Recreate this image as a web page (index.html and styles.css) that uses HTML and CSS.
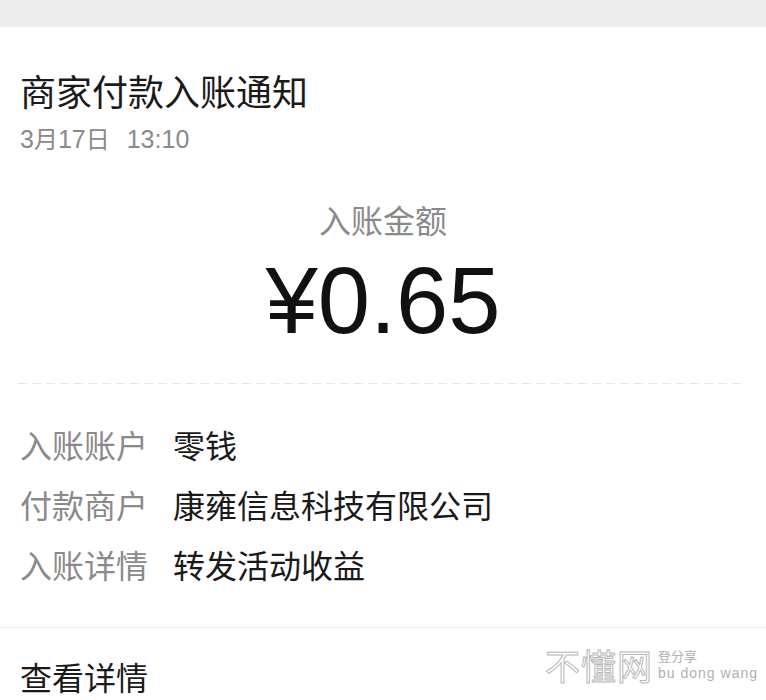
FILE: index.html
```html
<!DOCTYPE html>
<html lang="zh-CN">
<head>
    <meta charset="UTF-8">
    <meta name="viewport" content="width=device-width, initial-scale=1.0">
    <title>商家付款入账通知</title>
    <link rel="stylesheet" href="styles.css">
</head>
<body>

<div class="top-bar"></div>

<div class="notice">
    <div class="notice-head">
        <h1 class="notice-title">商家付款入账通知</h1>
        <div class="notice-date"><span class="latin">3</span>月<span class="latin">17</span>日<span class="latin time">13:10</span></div>
    </div>

    <div class="amount-box">
        <div class="amount-label">入账金额</div>
        <div class="amount-value">¥0.65</div>
    </div>

    <div class="dashed-line"></div>

    <div class="info-list">
        <div class="info-label">入账账户</div>
        <div class="info-value">零钱</div>
        <div class="info-label">付款商户</div>
        <div class="info-value">康雍信息科技有限公司</div>
        <div class="info-label">入账详情</div>
        <div class="info-value">转发活动收益</div>
    </div>
</div>

<div class="detail-link">
    <span>查看详情</span>
</div>

<div class="watermark">
    <span class="wm-big">不懂网</span>
    <span class="wm-small">
        <span class="wm-top">登分享</span>
        <span class="wm-pinyin">bu dong wang</span>
    </span>
</div>

</body>
</html>
```

FILE: styles.css
```css
body {
    margin: 0;
    background-color: #fff;
    font-family: "Noto Sans CJK SC", "Noto Sans", sans-serif;
    color: #1a1a1a;
    height: 700px;
    overflow: hidden;
    position: relative;
}

.top-bar {
    height: 27px;
    background-color: #ededed;
}

.notice {
    padding: 0 20px;
}

.notice-head {
    padding-top: 41px;
}

.notice-title {
    margin: 0;
    font-size: 36px;
    font-weight: normal;
    line-height: 44px;
}

.notice-date {
    margin-top: 10px;
    font-size: 24px;
    line-height: 32px;
    color: #8a8a8a;
}

.latin {
    font-family: "Liberation Sans", "Noto Sans", sans-serif;
    font-size: 25px;
}

.time {
    margin-left: 17px;
}

.amount-box {
    margin-top: 44px;
    text-align: center;
}

.amount-label {
    font-size: 32px;
    line-height: 40px;
    color: #8a8a8a;
}

.amount-value {
    margin-top: 12px;
    font-family: "Liberation Sans", "Noto Sans", sans-serif;
    font-size: 94px;
    line-height: 100px;
    color: #111;
}

.dashed-line {
    margin-top: 32px;
    margin-right: 1px;
    margin-left: -2px;
    height: 1px;
    background-image: repeating-linear-gradient(90deg, #e6e6e6 0, #e6e6e6 9px, transparent 9px, transparent 14px);
}

.info-list {
    margin-top: 30px;
    display: grid;
    grid-template-columns: 128px 1fr;
    column-gap: 25px;
    font-size: 32px;
    line-height: 60px;
}

.info-label {
    color: #8a8a8a;
}

.info-value {
    color: #1a1a1a;
}

.detail-link {
    margin-top: 33px;
    border-top: 1px solid #ececec;
    padding: 28px 20px 0;
    font-size: 32px;
    line-height: 40px;
}

.watermark {
    position: absolute;
    right: 8px;
    bottom: 16px;
    display: flex;
    align-items: center;
    gap: 5px;
    color: #fff;
    -webkit-text-stroke: 1px #b8b8b8;
}

.wm-big {
    font-size: 35px;
    line-height: 38px;
    letter-spacing: 1px;
}

.wm-small {
    display: flex;
    flex-direction: column;
    -webkit-text-stroke: 0;
    color: #b0b0b0;
}

.wm-top {
    font-size: 13px;
    line-height: 16px;
}

.wm-pinyin {
    font-family: "Liberation Sans", sans-serif;
    font-size: 14px;
    line-height: 18px;
    letter-spacing: 1px;
}
```
